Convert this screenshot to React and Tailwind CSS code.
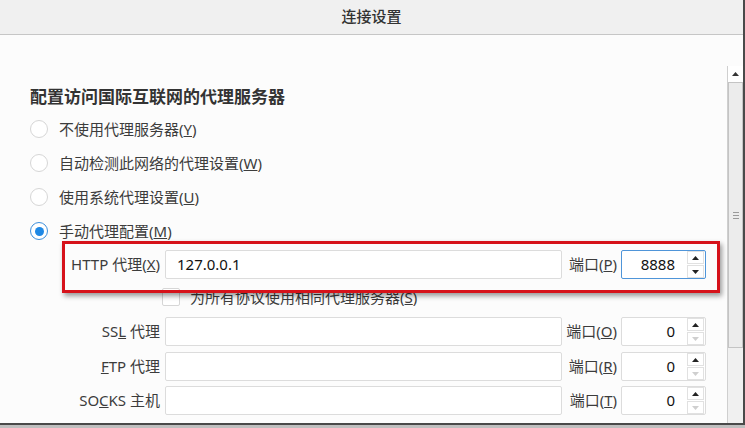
import React from 'react';

const font = { fontFamily: '"Noto Sans", "Noto Sans CJK SC", sans-serif' };

const Radio = ({ checked, children }) => (
  <div className="flex items-center h-[34px]">
    <span
      className={
        'w-[18px] h-[18px] rounded-full border bg-white flex items-center justify-center ' +
        (checked ? 'border-[#3d8fdb]' : 'border-[#d6d6d6]')
      }
    >
      {checked && <span className="w-[9px] h-[9px] rounded-full bg-[#1e88e5]"></span>}
    </span>
    <span className="ml-[11px] text-[15px] text-[#3c3c3c]">{children}</span>
  </div>
);

const Spinner = ({ down }) => (
  <div className="flex flex-col gap-[1px] w-[17px]">
    <div className="h-[13px] border border-[#e1e1e1] bg-white flex items-center justify-center">
      <svg width="7" height="4" viewBox="0 0 7 4">
        <path d="M0 4 L3.5 0 L7 4 Z" fill="#222" />
      </svg>
    </div>
    <div className="h-[13px] border border-[#e1e1e1] bg-white flex items-center justify-center">
      <svg width="7" height="4" viewBox="0 0 7 4">
        <path d="M0 0 L3.5 4 L7 0 Z" fill={down ? '#222' : '#cfcfcf'} />
      </svg>
    </div>
  </div>
);

const FieldRow = ({ label, value, port, portValue, focused, className }) => (
  <div className={'flex items-center h-[29px] ' + (className || '')}>
    <div className="w-[98px] flex justify-end text-[15px] text-[#3c3c3c] whitespace-nowrap">{label}</div>
    <div className="ml-[5px] w-[397px] h-full border border-[#dcdcdc] rounded-[2px] bg-white flex items-center pl-[11px] text-[15px] text-[#111]">
      {value}
    </div>
    <div className="w-[55px] flex justify-end text-[15px] text-[#3c3c3c] whitespace-nowrap">{port}</div>
    <div
      className={
        'ml-[4px] w-[85px] h-full rounded-[2px] bg-white flex items-center justify-end pr-[1px] border ' +
        (focused ? 'border-[#4f95d9]' : 'border-[#dcdcdc]')
      }
    >
      <span className="text-[15px] text-[#111] mr-[12px]">{portValue}</span>
      <Spinner down={focused} />
    </div>
  </div>
);

export default function App() {
  return (
    <div className="w-[745px] h-[428px] relative overflow-hidden flex flex-col bg-[#fcfcfc]" style={font}>
      <div className="flex flex-1 min-h-0">
        <div className="flex-1 flex flex-col">
          {/* Title bar */}
          <div className="h-[35px] shrink-0 bg-[#f0f0f0] border-b border-[#c6c6c6] flex items-center justify-center">
            <span className="text-[15px] font-medium text-[#333] -mt-[2px]">连接设置</span>
          </div>

          <div className="flex flex-1 min-h-0">
            {/* Content */}
            <div className="flex-1 pl-[30px] pt-[50px]">
              <div className="h-[24px] leading-[24px] text-[17px] font-bold text-[#333]">配置访问国际互联网的代理服务器</div>
              <div className="mt-[3px]">
                <Radio>不使用代理服务器(<u>Y</u>)</Radio>
                <Radio>自动检测此网络的代理设置(<u>W</u>)</Radio>
                <Radio>使用系统代理设置(<u>U</u>)</Radio>
                <Radio checked>手动代理配置(<u>M</u>)</Radio>
              </div>

              <div className="ml-[32px]">
                <FieldRow
                  className="mt-[2px]"
                  label={<span>HTTP 代理(<u>X</u>)</span>}
                  value="127.0.0.1"
                  port={<span>端口(<u>P</u>)</span>}
                  portValue="8888"
                  focused
                />
                <div className="flex items-center h-[20px] mt-[8px] pl-[100px]">
                  <span className="w-[18px] h-[18px] border border-[#d6d6d6] rounded-[2px] bg-white"></span>
                  <span className="ml-[10px] text-[15px] text-[#3c3c3c]">为所有协议使用相同代理服务器(<u>S</u>)</span>
                </div>
                <FieldRow
                  className="mt-[10px]"
                  label={<span>SS<u>L</u> 代理</span>}
                  value=""
                  port={<span>端口(<u>O</u>)</span>}
                  portValue="0"
                />
                <FieldRow
                  className="mt-[6px]"
                  label={<span><u>F</u>TP 代理</span>}
                  value=""
                  port={<span>端口(<u>R</u>)</span>}
                  portValue="0"
                />
                <FieldRow
                  className="mt-[5px]"
                  label={<span>SO<u>C</u>KS 主机</span>}
                  value=""
                  port={<span>端口(<u>T</u>)</span>}
                  portValue="0"
                />
              </div>
            </div>

            {/* Scrollbar */}
            <div className="w-[16px] pt-[31px] flex flex-col">
              <div className="flex-1 flex flex-col border-l border-[#cfcfcf] bg-[#f3f3f3]">
                <div className="h-[16px] flex items-center justify-center bg-white">
                  <svg width="7" height="4" viewBox="0 0 7 4">
                    <path d="M0 4 L3.5 0 L7 4 Z" fill="#333" />
                  </svg>
                </div>
                <div className="h-[266px] bg-[#ececec] border border-[#c4c4c4] flex items-center justify-center">
                  <div className="flex flex-col gap-[2px]">
                    <span className="w-[6px] h-px bg-[#9a9a9a]"></span>
                    <span className="w-[6px] h-px bg-[#9a9a9a]"></span>
                    <span className="w-[6px] h-px bg-[#9a9a9a]"></span>
                  </div>
                </div>
                <div className="flex-1 bg-[#f0f0f0]"></div>
              </div>
            </div>
          </div>
        </div>
        {/* Window edge */}
        <div className="w-[2px] bg-[#4a4a4a]"></div>
      </div>
      <div className="h-[2px] bg-[#4a4a4a]"></div>
      <div className="h-[3px] bg-[#bfbfbf]"></div>

      {/* Red annotation frame */}
      <div className="absolute left-[62px] top-[241px] w-[658px] h-[52px] border-[3px] border-[#d6121a] shadow-[2px_3px_5px_rgba(0,0,0,0.4)] pointer-events-none"></div>
    </div>
  );
}
